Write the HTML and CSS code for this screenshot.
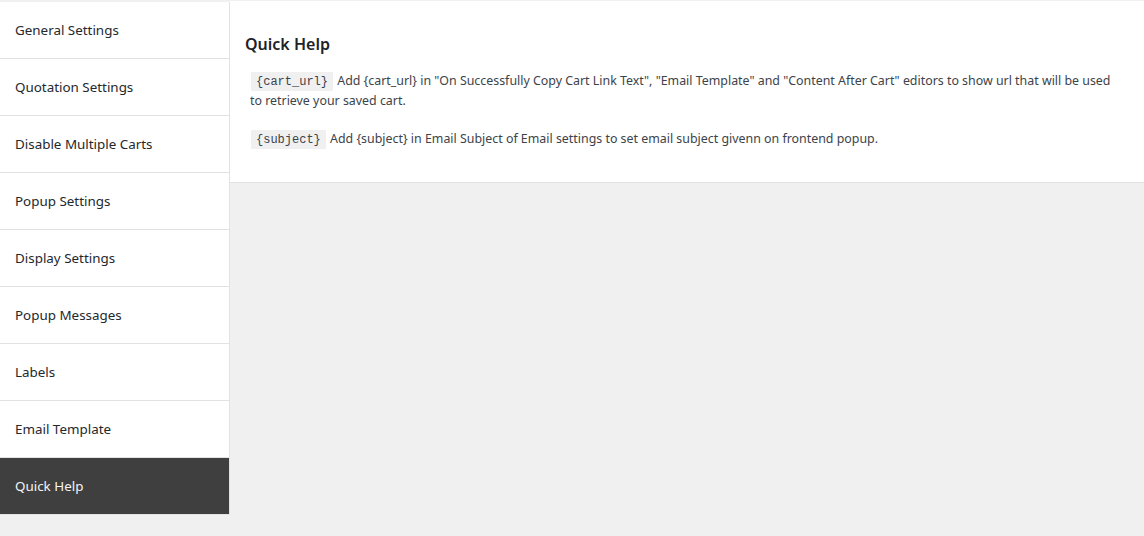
FILE: index.html
```html
<!DOCTYPE html>
<html lang="en">
<head>
    <meta charset="UTF-8">
    <meta name="viewport" content="width=device-width, initial-scale=1.0">
    <title>Quick Help</title>
    <link rel="stylesheet" href="styles.css">
</head>
<body>
<div class="settings-wrap">
    <ul class="settings-tabs">
        <li><a href="#">General Settings</a></li>
        <li><a href="#">Quotation Settings</a></li>
        <li><a href="#">Disable Multiple Carts</a></li>
        <li><a href="#">Popup Settings</a></li>
        <li><a href="#">Display Settings</a></li>
        <li><a href="#">Popup Messages</a></li>
        <li><a href="#">Labels</a></li>
        <li><a href="#">Email Template</a></li>
        <li class="active"><a href="#">Quick Help</a></li>
    </ul>

    <div class="settings-panel">
        <h2>Quick Help</h2>
        <p><code>{cart_url}</code> Add {cart_url} in "On Successfully Copy Cart Link Text", "Email Template" and "Content After Cart" editors to show url that will be used to retrieve your saved cart.</p>
        <p><code>{subject}</code> Add {subject} in Email Subject of Email settings to set email subject givenn on frontend popup.</p>
    </div>
</div>
</body>
</html>
```

FILE: styles.css
```css
body {
    margin: 0;
    background-color: #f0f0f0;
    font-family: "Noto Sans", "Open Sans", sans-serif;
    font-size: 12.4px;
    color: #3c434a;
}

.settings-wrap {
    display: flex;
    align-items: flex-start;
    padding-top: 1px;
}

.settings-tabs {
    list-style: none;
    margin: 1px 0 0 0;
    padding: 0;
    width: 229px;
    flex-shrink: 0;
    background-color: #fff;
    border-right: 1px solid #e2e2e2;
}

.settings-tabs li {
    border-bottom: 1px solid #e2e2e2;
}

.settings-tabs a {
    display: flex;
    align-items: center;
    height: 56px;
    padding-left: 15px;
    font-size: 13.4px;
    color: #23282d;
    text-decoration: none;
}

.settings-tabs li.active a {
    background-color: #3f3f3f;
    color: #f4f4f4;
}

.settings-panel {
    flex: 1;
    background-color: #fff;
    border-bottom: 1px solid #e2e2e2;
    padding: 13px 15px 15px 15px;
}

.settings-panel h2 {
    margin: 19px 0 16px 0;
    font-size: 16px;
    font-weight: 600;
    line-height: 22px;
    color: #1d2327;
}

.settings-panel p {
    margin: 0 14px 18px 5px;
    line-height: 20px;
}

code {
    padding: 3px 5px 2px 5px;
    margin: 0 1px;
    background-color: #f0f0f1;
    font-family: "Liberation Mono", monospace;
    font-size: 12px;
    line-height: 1;
    color: #3c434a;
}
```
